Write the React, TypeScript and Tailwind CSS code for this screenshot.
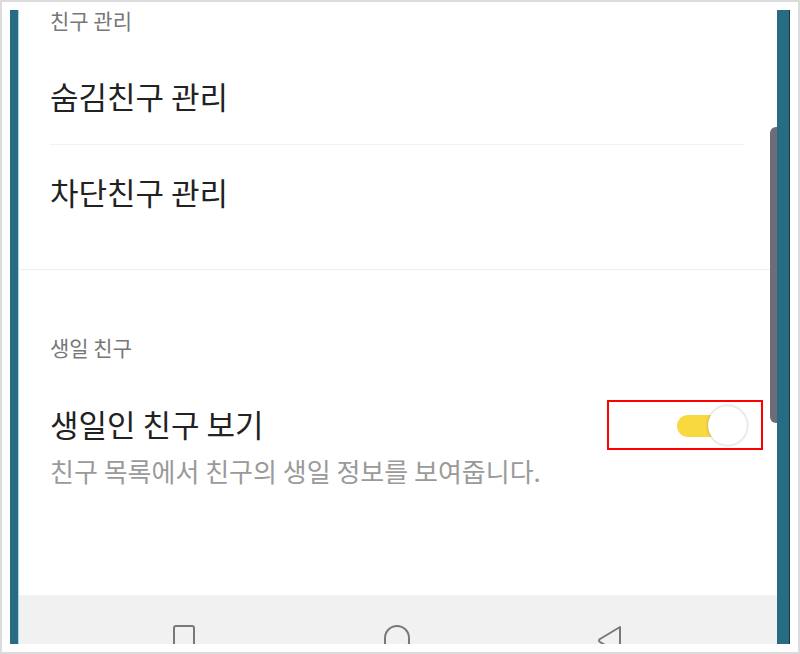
import React from "react";

const font = { fontFamily: '"Noto Sans CJK KR", "Noto Sans", sans-serif' };

export default function App() {
  return (
    <div
      className="w-[800px] h-[654px] bg-white border-2 border-[#dcdcdc] p-2 overflow-hidden"
      style={font}
    >
      <div className="flex h-full">
        <div className="w-[9px] bg-[#286c84] border-r border-[#a9d5e8]" />
        <div className="flex-1 flex flex-col relative bg-white">
          <div className="flex-1">
            <div className="pl-[31px] text-[21px] leading-[20px] text-[#777] h-[38px]">친구 관리</div>
            <div className="pl-[31px] h-[96px] flex items-center text-[31px] text-[#222]">숨김친구 관리</div>
            <div className="ml-[31px] mr-[32px] h-px bg-[#f2f2f2]" />
            <div className="pl-[31px] h-[95px] flex items-center text-[31px] text-[#222]">차단친구 관리</div>
            <div className="h-[29px]" />
            <div className="h-px bg-[#f0f0f0]" />
            <div className="h-[67px]" />
            <div className="pl-[31px] text-[21px] leading-[20px] text-[#777]">생일 친구</div>
            <div className="h-[43px]" />
            <div className="flex justify-between items-start pl-[31px] pr-[14px]">
              <div className="pt-[8px]">
                <div className="text-[31px] leading-[32px] text-[#222]">생일인 친구 보기</div>
                <div className="mt-[16px] text-[26px] leading-[30px] text-[#9a9a9a]">
                  친구 목록에서 친구의 생일 정보를 보여줍니다.
                </div>
              </div>
              <div className="w-[156px] h-[50px] border-2 border-[#ff0000] flex items-center justify-end pr-[14px]">
                <div className="relative w-[70px] h-[39px]">
                  <div className="absolute left-0 top-[9px] w-[62px] h-[22px] rounded-full bg-[#f8d940]" />
                  <div className="absolute right-0 top-0 w-[39px] h-[39px] rounded-full bg-white shadow-[0_0_3px_rgba(0,0,0,0.3)]" />
                </div>
              </div>
            </div>
          </div>
          <div className="h-[49px] bg-[#f1f1f1] flex items-start pt-[30px] overflow-hidden">
            <div className="ml-[154px] w-[22px] h-[26px] border-2 border-[#787878] rounded-[3px]" />
            <div className="ml-[189px] w-[26px] h-[30px] border-2 border-[#787878] rounded-full" />
            <svg className="ml-[187px]" width="25" height="30" viewBox="0 0 25 30">
              <path
                d="M23 2 L3 14 Q1 15.5 3 17 L23 29 Z"
                fill="none"
                stroke="#787878"
                strokeWidth="2"
                strokeLinejoin="round"
              />
            </svg>
          </div>
          <div className="absolute right-0 top-[117px] bottom-[221px] w-[7px] bg-[#6f6c7a] rounded-l-[6px]" />
        </div>
        <div className="w-[13px] bg-[#286c84] border-r border-[#1b3440]" />
      </div>
    </div>
  );
}
